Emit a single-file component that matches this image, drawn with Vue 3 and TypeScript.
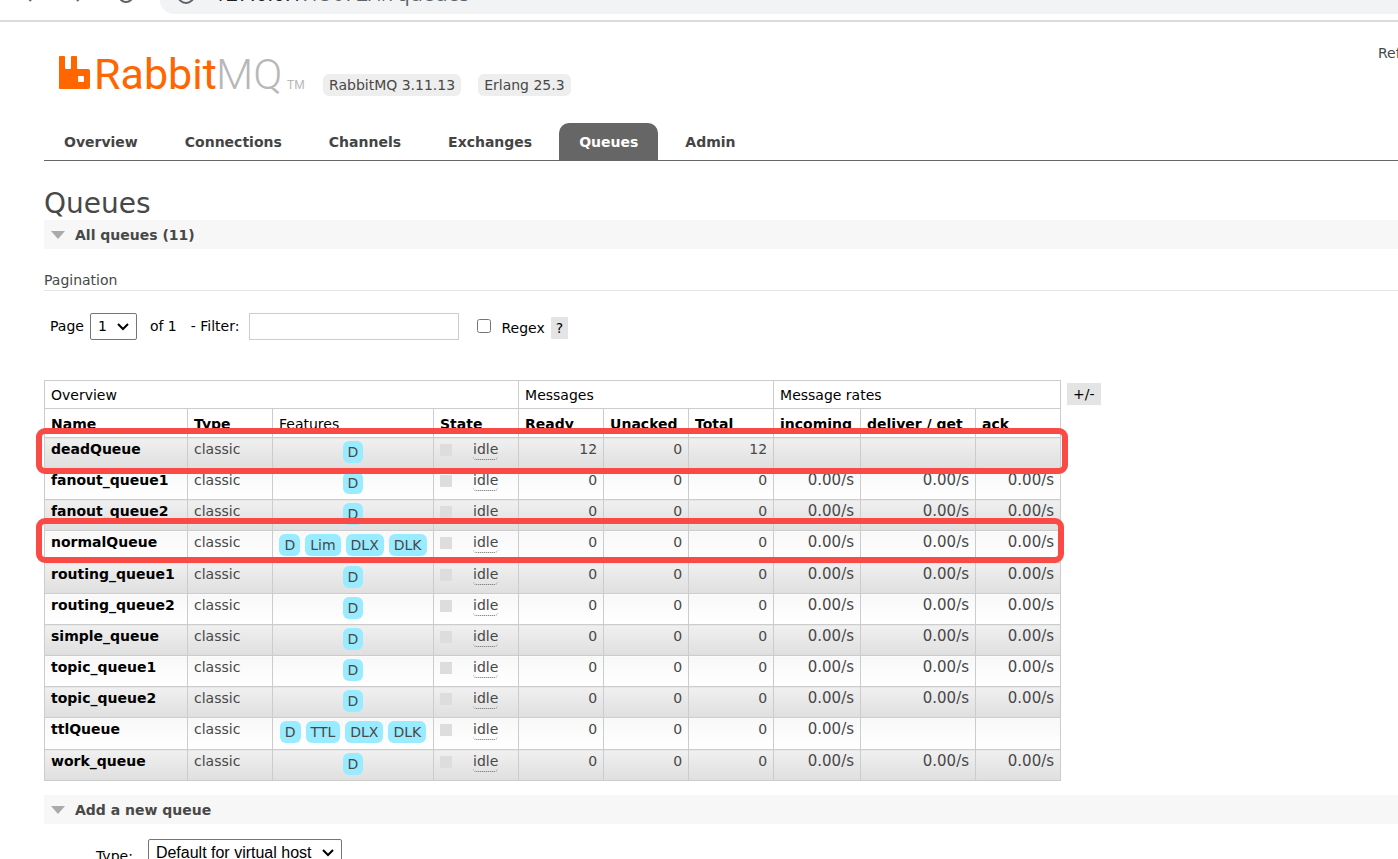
<script setup lang="ts">
import { ref } from 'vue'

interface Queue {
  name: string
  features: string[]
  ready: number
  unacked: number
  total: number
  incoming: string
  deliver: string
  ack: string
}

const rate = '0.00/s'

function queue(name: string, features: string[] = ['D'], deliver = rate): Queue {
  return { name, features, ready: 0, unacked: 0, total: 0, incoming: rate, deliver, ack: deliver }
}

const queues: Queue[] = [
  { name: 'deadQueue', features: ['D'], ready: 12, unacked: 0, total: 12, incoming: '', deliver: '', ack: '' },
  queue('fanout_queue1'),
  queue('fanout_queue2'),
  queue('normalQueue', ['D', 'Lim', 'DLX', 'DLK']),
  queue('routing_queue1'),
  queue('routing_queue2'),
  queue('simple_queue'),
  queue('topic_queue1'),
  queue('topic_queue2'),
  queue('ttlQueue', ['D', 'TTL', 'DLX', 'DLK'], ''),
  queue('work_queue'),
]

const tabs = ['Overview', 'Connections', 'Channels', 'Exchanges', 'Queues', 'Admin']
const active = ref('Queues')
const filter = ref('')
const regex = ref(false)
</script>

<template>
  <div class="window">
    <div class="toolbar">
      <svg class="nav-icons" width="140" height="20" viewBox="0 0 140 20" fill="none" stroke="#5f6368" stroke-width="2">
        <path d="M31 1 L26 -4 M77 1 L82 -4" />
        <circle cx="126" cy="-5" r="7" />
      </svg>
      <div class="address">
        <svg width="20" height="20" viewBox="0 0 20 20" fill="none" stroke="#5f6368" stroke-width="2">
          <circle cx="10" cy="-5" r="8" />
        </svg>
        <span class="url"><b>127.0.0.1</b>:15672/#/queues</span>
      </div>
    </div>

    <header class="header">
      <a class="logo" href="#/" aria-label="RabbitMQ">
        <svg width="250" height="54" viewBox="0 -4 250 54">
          <path
            fill="#f60"
            d="M2 4h4q1 0 1 1v11q0 1 1 1h4q1 0 1-1V5q0-1 1-1h4q1 0 1 1v11q0 1 1 1h10q2 0 2 2v16q0 2-2 2H2q-1 0-1-1V5q0-1 1-1zM21 24q-1 0-1 1v4q0 1 1 1h4q1 0 1-1v-4q0-1-1-1z"
          />
          <text class="logo-text" x="36" y="37" fill="#f60">Rabbit</text>
          <text class="logo-text thin" x="158" y="37" fill="#b8b8b8">MQ</text>
          <text class="logo-tm" x="229" y="37" fill="#b8b8b8">TM</text>
        </svg>
      </a>
      <span class="version">RabbitMQ 3.11.13</span>
      <span class="version">Erlang 25.3</span>
      <span class="refresh">Ref</span>
    </header>

    <nav class="tabs">
      <a v-for="tab in tabs" :key="tab" href="#/queues" :class="{ selected: tab === active }" @click.prevent="active = tab">{{ tab }}</a>
    </nav>

    <main>
      <h1>Queues</h1>
      <h2><svg width="14" height="8" viewBox="0 0 14 8"><path d="M0 0h14L7 8z" fill="#aaa" /></svg>All queues (11)</h2>
      <h3>Pagination</h3>

      <form class="pager" @submit.prevent>
        <label for="page">Page</label>
        <span class="select page-select">
          <select id="page"><option>1</option></select>
          <svg width="12" height="8" viewBox="0 0 12 8"><path d="M1 1l5 5 5-5" fill="none" stroke="#000" stroke-width="2" /></svg>
        </span>
        <span class="of">of 1</span>
        <label class="filter-label" for="filter">- Filter:</label>
        <input id="filter" v-model="filter" class="filter" type="text" />
        <input id="regex" v-model="regex" class="regex" type="checkbox" />
        <label class="regex-label" for="regex">Regex</label>
        <button class="help" type="button">?</button>
      </form>

      <div class="listing">
        <table>
          <colgroup>
            <col class="c-name" /><col class="c-std" /><col class="c-feat" /><col class="c-std" />
            <col class="c-std" /><col class="c-std" /><col class="c-std" />
            <col class="c-in" /><col class="c-get" /><col class="c-std" />
          </colgroup>
          <thead>
            <tr class="groups">
              <th colspan="4">Overview</th>
              <th colspan="3">Messages</th>
              <th colspan="3">Message rates</th>
            </tr>
            <tr class="columns">
              <th>Name</th>
              <th>Type</th>
              <th class="plain">Features</th>
              <th>State</th>
              <th>Ready</th>
              <th>Unacked</th>
              <th>Total</th>
              <th>incoming</th>
              <th>deliver / get</th>
              <th>ack</th>
            </tr>
          </thead>
          <tbody>
            <tr v-for="q in queues" :key="q.name" :class="{ tall: q.features.length > 1 }">
              <td><a class="name" href="#/queues">{{ q.name }}</a></td>
              <td>classic</td>
              <td><div class="features"><abbr v-for="f in q.features" :key="f">{{ f }}</abbr></div></td>
              <td><div class="state"><i></i><span>idle</span></div></td>
              <td class="num">{{ q.ready }}</td>
              <td class="num">{{ q.unacked }}</td>
              <td class="num">{{ q.total }}</td>
              <td class="rate">{{ q.incoming }}</td>
              <td class="rate">{{ q.deliver }}</td>
              <td class="rate">{{ q.ack }}</td>
            </tr>
          </tbody>
        </table>
        <button class="toggle" type="button">+/-</button>
        <div class="mark mark-dead"></div>
        <div class="mark mark-normal"></div>
      </div>

      <h2><svg width="14" height="8" viewBox="0 0 14 8"><path d="M0 0h14L7 8z" fill="#aaa" /></svg>Add a new queue</h2>
      <form class="add" @submit.prevent>
        <label for="type">Type:</label>
        <span class="select type-select">
          <select id="type"><option>Default for virtual host</option></select>
          <svg width="12" height="8" viewBox="0 0 12 8"><path d="M1 1l5 5 5-5" fill="none" stroke="#000" stroke-width="2" /></svg>
        </span>
      </form>
    </main>
  </div>
</template>

<style>
body {
  margin: 0;
  background: #fff;
}
</style>

<style scoped>
.window {
  height: 100vh;
  overflow: hidden;
  color: #484848;
  font: 14px/20px "DejaVu Sans", Verdana, sans-serif;
}
.toolbar {
  display: flex;
  height: 20px;
  overflow: hidden;
  border-bottom: 2px solid #dadcdc;
}
.nav-icons {
  flex: none;
  margin-right: 20px;
}
.address {
  display: flex;
  flex: 1;
  height: 14px;
  padding-left: 16px;
  background: #f1f3f4;
  border-bottom-left-radius: 16px;
}
.address svg {
  flex: none;
}
.url {
  height: 28px;
  margin: -21px 0 0 18px;
  color: #5f6368;
  font: 21px/28px "Open Sans", "Noto Sans", sans-serif;
}
.url b {
  color: #202124;
  font-weight: 400;
}
.header {
  display: flex;
  align-items: flex-start;
  height: 101px;
  padding-left: 58px;
}
.logo {
  margin-top: 26px;
  width: 265px;
}
.logo-text {
  font: 400 43px Roboto, "Open Sans", sans-serif;
}
.thin {
  font-weight: 300;
}
.logo-tm {
  font: 400 12px Roboto, "Open Sans", sans-serif;
}
.version {
  margin: 52px 15px 0 0;
  padding: 1px 6px;
  background: #eee;
  border-radius: 6px;
}
.version + .version {
  margin-left: 2px;
}
.refresh {
  width: 20px;
  margin: 21px 0 0 auto;
  overflow: hidden;
}
.tabs {
  display: flex;
  gap: 7px;
  margin-left: 44px;
  border-bottom: 1px solid #666;
}
.tabs a {
  padding: 9px 20px 8px;
  border-radius: 10px 10px 0 0;
  color: #444;
  font-weight: 700;
  text-decoration: none;
}
.tabs a.selected {
  background: #666;
  color: #fff;
}
main {
  padding-left: 44px;
}
h1 {
  margin: 0;
  padding-top: 27px;
  font-size: 28px;
  font-weight: 400;
  line-height: 32px;
}
h2 {
  display: flex;
  align-items: center;
  gap: 10px;
  margin: 0;
  padding: 5px 7px 4px;
  background: #f7f7f7;
  font-size: 14px;
  line-height: 20px;
}
h3 {
  margin: 21px 0 0;
  border-bottom: 1px solid #e4e4e4;
  font-size: 14px;
  font-weight: 400;
  line-height: 20px;
}
.pager {
  display: flex;
  align-items: center;
  height: 28px;
  margin: 21px 0 40px;
  padding-left: 6px;
  color: #000;
}
.select {
  position: relative;
  display: inline-flex;
}
.select select {
  width: 100%;
  margin: 0;
  padding: 0 7px;
  appearance: none;
  background: #fff;
  border: 1px solid #767676;
  border-radius: 2px;
  color: #000;
}
.select svg {
  position: absolute;
  top: 10px;
  right: 8px;
}
.page-select {
  width: 47px;
  margin: 0 13px 0 6px;
}
.page-select select {
  height: 27px;
  font: 14px "DejaVu Sans", Verdana, sans-serif;
}
.filter-label {
  margin: 0 10px 0 14px;
}
.filter {
  box-sizing: border-box;
  width: 210px;
  height: 27px;
  margin: 0;
  border: 1px solid #ccc;
  font: 14px "DejaVu Sans", Verdana, sans-serif;
}
.regex {
  width: 14px;
  height: 14px;
  margin: 0 10px 0 18px;
}
.regex-label {
  margin-top: 4px;
}
.help,
.toggle {
  height: 22px;
  padding: 0 5px;
  background: #e4e4e4;
  border: 0;
  color: #000;
  font: 14px/22px "DejaVu Sans", Verdana, sans-serif;
}
.toggle {
  padding: 0 6px;
}
.help {
  margin: 4px 0 0 6px;
}
.listing {
  position: relative;
  display: flex;
  align-items: flex-start;
  margin-bottom: 14px;
}
table {
  width: 1017px;
  border-collapse: collapse;
  table-layout: fixed;
}
.c-name {
  width: 143px;
}
.c-std {
  width: 85px;
}
.c-feat {
  width: 161px;
}
.c-in {
  width: 87px;
}
.c-get {
  width: 115px;
}
th,
td {
  box-sizing: border-box;
  padding: 0 6px;
  border: 1px solid #ccc;
  text-align: left;
  white-space: nowrap;
}
th {
  color: #000;
}
.groups th,
th.plain {
  font-weight: 400;
}
.groups th {
  height: 28px;
}
.columns th {
  height: 29px;
  padding-top: 2px;
}
td {
  height: 31px;
  padding-top: 2px;
  line-height: 19px;
  vertical-align: top;
}
.tall td {
  height: 32px;
}
tbody tr:nth-child(odd) td {
  background: linear-gradient(#f0f0f0, #dfdfdf);
}
tbody tr:nth-child(even) td {
  background: linear-gradient(#f8f8f8, #fff);
}
.name {
  color: #000;
  font-weight: 700;
  text-decoration: none;
}
.features {
  display: flex;
  justify-content: center;
  gap: 5px;
  padding-top: 1px;
}
.features abbr {
  height: 22px;
  padding: 0 5px;
  background: #99ebff;
  border-radius: 6px;
  line-height: 22px;
}
.state {
  display: flex;
  align-items: flex-start;
}
.state i {
  width: 12px;
  height: 12px;
  margin: 4px 21px 0 0;
  background: #ddd;
}
.state span {
  border-bottom: 1px dotted #666;
  border-radius: 4px;
  line-height: 19px;
}
.num,
.rate {
  text-align: right;
}
.rate {
  font-size: 15px;
}
.toggle {
  margin: 3px 0 0 6px;
}
.mark {
  position: absolute;
  left: -8px;
  box-sizing: border-box;
  border: 6px solid #f94a46;
  border-radius: 9px;
}
.mark-dead {
  top: 48px;
  width: 1032px;
  height: 46px;
}
.mark-normal {
  top: 138px;
  width: 1028px;
  height: 45px;
}
.add {
  display: flex;
  padding: 15px 0 0 52px;
  color: #000;
}
.add label {
  margin: 7px 15px 0 0;
}
.type-select {
  width: 194px;
}
.type-select select {
  height: 27px;
  font: 16px "Liberation Sans", Arial, sans-serif;
}
</style>
